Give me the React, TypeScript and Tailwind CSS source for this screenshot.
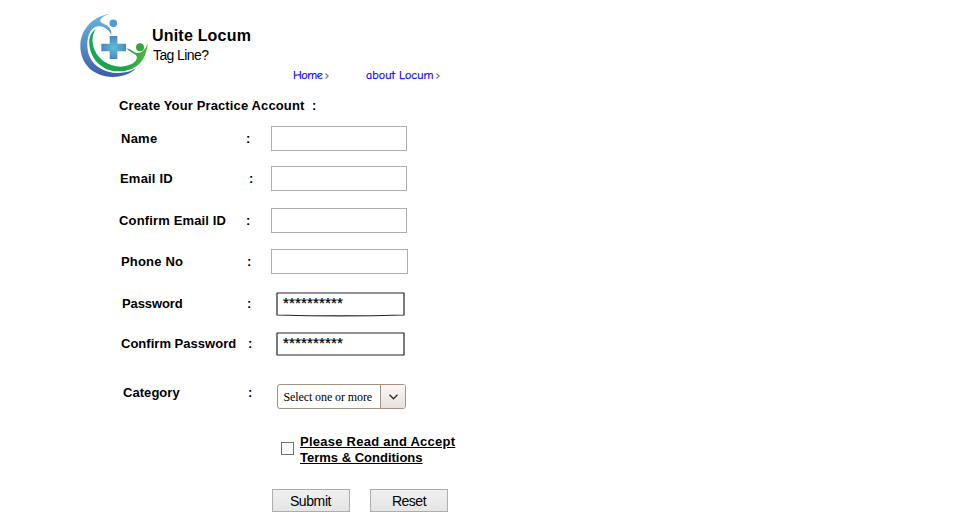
import type { ReactNode } from "react";

function Logo() {
  return (
    <svg className="block h-[65px] w-[70px]" viewBox="27 24 210 195" aria-hidden="true">
      <defs>
        <linearGradient id="ring" x1="0" y1="0" x2="0" y2="1">
          <stop offset="0" stopColor="#65b7dc" />
          <stop offset="0.5" stopColor="#568cc5" />
          <stop offset="1" stopColor="#3c5dab" />
        </linearGradient>
        <linearGradient id="leaf" x1="0" y1="0" x2="1" y2="0">
          <stop offset="0" stopColor="#19a65a" />
          <stop offset="0.6" stopColor="#16a34a" />
          <stop offset="1" stopColor="#5cb544" />
        </linearGradient>
        <radialGradient id="cross">
          <stop offset="0" stopColor="#5fc0d8" />
          <stop offset="1" stopColor="#4d86bd" />
        </radialGradient>
      </defs>
      <path
        d="M118 27C67 34 31 75 31 124C31 177 72 216 127 216C153 216 180 209 199 190C181 202 155 206 128 203C84 197 53 166 52 124C51 94 60 72 78 65C96 60 113 68 124 90C126 76 119 65 107 59C97 54 88 51 91 44C96 35 108 30 118 27Z"
        fill="url(#ring)"
      />
      <path
        d="M77 72C62 82 56 99 58 119C62 162 96 198 143 199C172 199 193 190 205 179C223 164 232 138 233 114C227 133 214 145 202 144C191 143 185 132 169 130C177 140 193 144 200 154C204 166 190 179 163 184C125 190 86 167 73 133C64 109 67 87 77 72Z"
        fill="url(#leaf)"
      />
      <circle cx="130" cy="55" r="11.5" fill="#539bcb" />
      <circle cx="210" cy="127" r="12" fill="#35a43a" />
      <path d="M119 93H142V116H168V139H142V162H119V139H94V116H119Z" fill="url(#cross)" />
    </svg>
  );
}

function Field({ row, label, name, colon, children }: { row: string; label: string; name: string; colon: string; children: ReactNode }) {
  return (
    <div className={"flex items-start " + row}>
      <div className={"flex shrink-0 text-[13px] leading-[15px] font-bold whitespace-nowrap " + colon}>
        <label className={"shrink-0 " + name}>{label}</label>
        <span className="w-[5px]">:</span>
      </div>
      {children}
    </div>
  );
}

function TextBox({ className }: { className: string }) {
  return <input type="text" className={"block h-[25px] border border-[#abadb3] bg-white px-1 outline-none " + className} />;
}

function PasswordBox({ bowed = false }: { bowed?: boolean }) {
  return (
    <div className="relative ml-auto h-6 w-[129px]">
      <svg className="absolute inset-0 overflow-visible" width="129" height="24" aria-hidden="true">
        <path
          d={bowed ? "M1 1H128V23Q64 24.8 1 23Z" : "M1 1H128V23H1Z"}
          fill="white"
          stroke="#242424"
          strokeWidth="1.2"
          strokeLinejoin="round"
        />
      </svg>
      <span className="relative block pt-[3px] pl-[7px] text-[15px] leading-[16px] tracking-[0.17px] [-webkit-text-stroke:0.25px_black]">**********</span>
    </div>
  );
}

export default function App() {
  return (
    <main className="h-[526px] w-[954px] overflow-hidden bg-white font-['Liberation_Sans',Arial,sans-serif] text-black">
      <header className="flex h-[84px] pt-[13px] pl-[79px]">
        <Logo />
        <div className="w-[141px] shrink-0 pt-[14px] pl-[3px]">
          <h1 className="text-[16px] leading-[18px] font-bold tracking-[0.2px]">Unite Locum</h1>
          <p className="mt-[2px] pl-px text-[14px] leading-[16px] tracking-[-0.6px]">Tag Line?</p>
        </div>
        <nav className="flex pt-[54px] pl-[3px] font-['Comic_Sans_MS','Comic_Neue',cursive] text-[12px] leading-[16px]">
          <a href="#home" className="flex w-[73px] tracking-[-0.4px] text-[#0800ee] [-webkit-text-stroke:0.25px_#0800ee]">
            Home<Chevron />
          </a>
          <a href="#about" className="flex tracking-[0.08px] whitespace-nowrap text-[#0800ee] [-webkit-text-stroke:0.25px_#0800ee]">
            about Locum<Chevron />
          </a>
        </nav>
      </header>
      <form onSubmit={(event) => event.preventDefault()}>
        <h2 className="h-[42px] pt-[14px] pl-[119px] text-[13px] leading-[16px] font-bold tracking-[0.13px] whitespace-pre">
          Create Your Practice Account  :
        </h2>
        <Field row="h-10 w-[407px] pl-[121px]" label="Name" name="w-[125px] tracking-[0.25px]" colon="pt-[5px]">
          <TextBox className="ml-auto w-[136px]" />
        </Field>
        <Field row="h-[42px] w-[407px] pl-[120px]" label="Email ID" name="w-[129px] tracking-[0.2px]" colon="pt-[5px]">
          <TextBox className="ml-auto w-[136px]" />
        </Field>
        <Field row="h-[41px] w-[407px] pl-[119px]" label="Confirm Email ID" name="w-[127px] tracking-[0.15px]" colon="pt-[5px]">
          <TextBox className="ml-auto w-[136px]" />
        </Field>
        <Field row="h-[43px] w-[408px] pl-[121px]" label="Phone No" name="w-[126px] tracking-[0.18px]" colon="pt-[5px]">
          <TextBox className="ml-auto w-[137px]" />
        </Field>
        <Field row="h-10 w-[405px] pl-[122px]" label="Password" name="w-[125px] tracking-[-0.1px]" colon="pt-[4px]">
          <PasswordBox bowed />
        </Field>
        <Field row="h-[52px] w-[405px] pl-[121px]" label="Confirm Password" name="w-[127px] tracking-[0.02px]" colon="pt-[4px]">
          <PasswordBox />
        </Field>
        <Field row="h-[49px] w-[406px] pl-[123px]" label="Category" name="w-[125px] tracking-[0.05px]" colon="pt-px">
          <button
            type="button"
            className="ml-auto flex h-[25px] w-[129px] overflow-hidden rounded-[3px] border border-[#a19485] bg-white text-left"
          >
            <span className="w-[102px] pt-px pl-[5.5px] font-['Liberation_Serif',serif] text-[12px] leading-[23px] tracking-[-0.1px] whitespace-nowrap">
              Select one or more
            </span>
            <span className="flex h-full w-[25px] items-center justify-center border-l border-[#a19485] bg-linear-to-b from-[#faf9f8] to-[#e5e1dc]">
              <svg width="9" height="6" viewBox="0 0 9 6" fill="none" stroke="#303030" strokeWidth="1.4">
                <path d="M.5.7 4.5 4.7 8.5.7" />
              </svg>
            </span>
          </button>
        </Field>
        <div className="flex h-14 pt-px pl-[281px]">
          <input type="checkbox" className="mt-2 mr-1.5 block size-[13px] shrink-0 appearance-none border border-[#707070] bg-white" />
          <a href="#terms" className="text-[13px] leading-[16px] font-bold underline">
            <span className="tracking-[0.25px]">Please Read and Accept</span>
            <br />
            <span>Terms &amp; Conditions</span>
          </a>
        </div>
        <div className="flex gap-5 pl-[272px]">
          <button type="submit" className="h-[23px] w-[78px] border border-[#adadad] bg-linear-to-b from-[#f0f0f0] to-[#e5e5e5] pr-px text-[14px] leading-[16px] tracking-[-0.4px]">
            Submit
          </button>
          <button type="reset" className="h-[23px] w-[78px] border border-[#adadad] bg-linear-to-b from-[#f0f0f0] to-[#e5e5e5] text-[14px] leading-[16px] tracking-[-0.5px]">
            Reset
          </button>
        </div>
      </form>
    </main>
  );
}

function Chevron() {
  return (
    <svg className="mt-[6px] ml-[3px]" width="4" height="6" viewBox="0 0 4 6" fill="none" stroke="#777" strokeWidth="1.2">
      <path d="M.5.5 3.2 3 .5 5.5" />
    </svg>
  );
}
